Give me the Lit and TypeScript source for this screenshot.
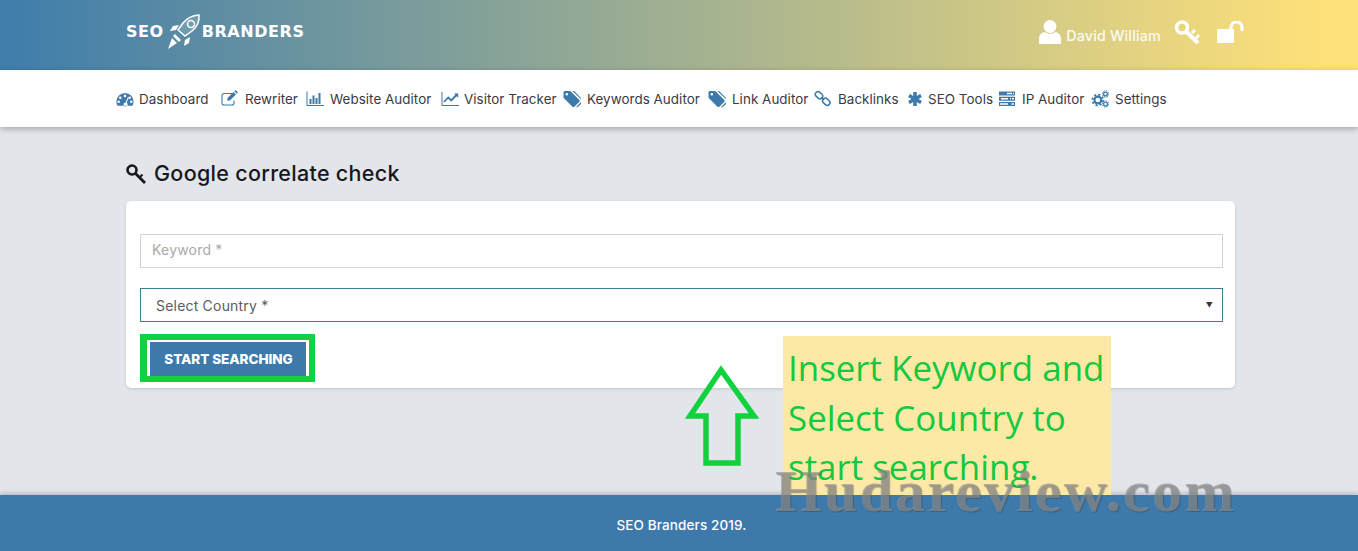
import { LitElement, html, css, svg } from "lit";
import { customElement } from "lit/decorators.js";

const ic: Record<string, any> = {
  dashboard: svg`<path fill-rule="evenodd" d="M9 3a8.6 8.6 0 0 0-8.6 8.6c0 1.500.4 2.900 1.100 4.100h15c.7-1.200 1.100-2.600 1.100-4.100A8.600 8.600 0 0 0 9 3zM9 4.600a1.300 1.300 0 1 1 0 2.600 1.300 1.300 0 0 1 0-2.600zM4.300 6.400a1.300 1.300 0 1 1 0 2.600 1.300 1.300 0 0 1 0-2.600zM13.700 6.400a1.300 1.300 0 1 1 0 2.600 1.300 1.300 0 0 1 0-2.600zM2.700 10.500a1.300 1.300 0 1 1 0 2.600 1.300 1.300 0 0 1 0-2.600zM15.300 10.500a1.300 1.300 0 1 1 0 2.600 1.300 1.300 0 0 1 0-2.600zM11.800 7.200l.9.4-2 5.200a2 2 0 1 1-1-.3z"/>`,
  edit: svg`<path fill="none" stroke="currentColor" stroke-width="1.100" d="M13 10.500V13a2 2 0 0 1-2 2H3a2 2 0 0 1-2-2V5.500a2 2 0 0 1 2-2h8"/><path d="M6.500 8 12.500 2l2.400 2.400-6 6-2.600.3zM13.300 1.200l.8-.7c.3-.3.7-.3 1 0l1.400 1.400c.3.3.3.7 0 1l-.7.8z"/>`,
  bars: svg`<path d="M.5 1.500h1V15h16.500v1H.5zM3.500 9h2v5h-2zM6.500 5.500h2V14h-2zM9.500 8h2v6h-2zM12.500 3h2v11h-2z"/>`,
  line: svg`<path d="M.5 2h1v13h16.500v1H.5z"/><path fill="none" stroke="currentColor" stroke-width="1.800" d="M3 12l4.200-4.500 3 3L16 4.500"/><path d="M13 3.500h4.200v4.200z"/>`,
  tags: svg`<path fill-rule="evenodd" d="M.5 2.500v5.300L9.500 16.800c.5.500 1.300.5 1.800 0l5-5c.5-.5.500-1.300 0-1.800L7.300 1H2c-.8 0-1.500.7-1.500 1.500zM3.800 3a1.300 1.300 0 1 1 0 2.600 1.300 1.300 0 0 1 0-2.600z"/><path d="M9.300 1h1.800l9 9c.5.500.5 1.300 0 1.800l-5.300 5.300c-.5.400-1.100.4-1.600 0l5.400-5.700c.5-.5.500-1 0-1.500z"/>`,
  link: svg`<g fill="none" stroke="currentColor" stroke-width="1.500"><rect x="1" y="2.500" width="8" height="5.400" rx="2.700" transform="rotate(42 5 5.200)"/><rect x="8.300" y="9" width="8" height="5.400" rx="2.700" transform="rotate(42 12.300 11.700)"/><path d="M7.300 7.300l2.800 2.600"/></g>`,
  star: svg`<g><rect x="7.200" y="2" width="3.600" height="14" rx=".5"/><rect x="7.200" y="2" width="3.600" height="14" rx=".5" transform="rotate(60 9 9)"/><rect x="7.200" y="2" width="3.600" height="14" rx=".5" transform="rotate(120 9 9)"/></g>`,
  server: svg`<path fill-rule="evenodd" d="M1 1.500h16v4H1zM9 2.700v1.500h5V2.700zM15 2.700v1.500h1V2.700zM1 6.700h16v4H1zM3 8v1.500h7V8zM12 8v1.500h1V8zM14 8v1.500h2V8zM1 12h16v4H1zM2 13.300v1.500h8v-1.500zM13.500 13.300v1.500h2.500v-1.500z"/>`,
  cogs: svg`<g fill="none" stroke="currentColor"><circle cx="6.800" cy="10" r="3.400" stroke-width="2.200"/><circle cx="6.800" cy="10" r="5.400" stroke-width="1.800" stroke-dasharray="2.200 2"/><circle cx="14.500" cy="4" r="1.900" stroke-width="1.300"/><circle cx="14.500" cy="4" r="3.200" stroke-width="1" stroke-dasharray="1.300 1.200"/><circle cx="14.500" cy="14" r="1.900" stroke-width="1.300"/><circle cx="14.500" cy="14" r="3.200" stroke-width="1" stroke-dasharray="1.300 1.200"/></g>`,
};
const items = [
  ["dashboard", "Dashboard", 72, 5], ["edit", "Rewriter", 51, 6], ["bars", "Website Auditor", 101, 6],
  ["line", "Visitor Tracker", 89, 5], ["tags", "Keywords Auditor", 111, 6], ["tags", "Link Auditor", 72, 6],
  ["link", "Backlinks", 58, 6], ["star", "SEO Tools", 60, 4], ["server", "IP Auditor", 59, 6], ["cogs", "Settings", 51, 6],
] as const;

@customElement("app-root")
export class AppRoot extends LitElement {
  static styles = css`
    :host { display: block; position: relative; width: 1358px; height: 551px; overflow: hidden; font-family: Inter, "Liberation Sans", sans-serif; background: #e2e5ea; }
    .head { height: 70px; box-sizing: border-box; padding: 0 113px 0 126px; display: flex; align-items: center; justify-content: space-between; background: linear-gradient(90deg, #3f7dab 0%, #fde07a 97%); color: #fff; }
    .logo { display: flex; align-items: center; font-family: "DejaVu Sans", sans-serif; font-weight: 700; font-size: 16px; letter-spacing: .55px; margin-top: -7px; }
    .logo svg { margin: 0 0 0 2px; }
    .user { display: flex; align-items: center; font-size: 14.300px; font-weight: 500; }
    .user > svg:first-child { margin-top: -7px; }
    .user span { margin: 1px 0 0 4px; letter-spacing: .2px; opacity: .92; }
    .user .k { margin: -6px 0 0 13px; }
    .user .u { margin: -7px 0 0 16px; }
    .nav { height: 57px; box-sizing: border-box; background: #fff; box-shadow: 0 2px 6px rgba(0,0,0,.28); padding: 0 0 0 116px; display: flex; align-items: center; gap: 10px; position: relative; }
    .item { display: flex; align-items: center; color: #3d7aab; }
    .item svg { display: block; width: 18px; height: 18px; fill: currentColor; }
    .item span { color: #3a3a44; font-size: 13.400px; letter-spacing: .05px; white-space: nowrap; }
    .main { height: 368px; box-sizing: border-box; padding: 33px 123px 0 126px; }
    h1 { margin: 0 0 14px; height: 27px; box-sizing: border-box; padding-bottom: 1px; display: flex; align-items: center; gap: 8px; font-size: 21.500px; font-weight: 500; color: #17171c; letter-spacing: .3px; }
    h1 svg { margin-top: 1px; }
    .card { height: 187px; box-sizing: border-box; background: #fff; border-radius: 5px; box-shadow: 0 1px 3px rgba(0,0,0,.14); padding: 33px 12px 0 14px; }
    .field { height: 34px; box-sizing: border-box; border: 1px solid #ced4da; display: flex; align-items: center; padding: 0 11px 3px; font-size: 14px; color: #a9a9ad; margin-bottom: 20px; letter-spacing: .2px; }
    .select { border-color: #3f7f93; color: #5c5c62; padding: 0 9px 0 15px; justify-content: space-between; }
    .select i { font-style: normal; font-size: 7px; color: #333; }
    .btn { box-sizing: border-box; display: inline-flex; align-items: center; justify-content: center; width: 157px; height: 36px; margin-left: 10px; padding-bottom: 2px; background: #3d7aab; color: #fff; font-weight: 800; font-size: 13.500px; letter-spacing: -.05px; }
    .foot { height: 56px; box-sizing: border-box; background: #3d7aab; box-shadow: 0 -2px 4px rgba(0,0,0,.18); display: flex; align-items: center; justify-content: center; color: #fff; font-size: 13.500px; font-weight: 500; letter-spacing: .12px; padding: 3px 0 0 5px; position: relative; }
    .box { position: absolute; left: 140px; top: 334px; width: 175px; height: 48px; box-sizing: border-box; border-style: solid; border-color: #0fd23e; border-width: 6px 6px 6px 7px; }
    .box::before { content: ""; position: absolute; left: 0; top: 0; bottom: 0; width: 3px; background: #fff; }
    .box::after { content: ""; position: absolute; right: 1px; top: 0; bottom: 0; width: 2px; background: #fff; }
    .arrow { position: absolute; left: 680px; top: 360px; }
    .note { position: absolute; left: 783px; top: 336px; width: 328px; height: 159px; box-sizing: border-box; padding: 7px 0 0 5px; background: #fde9a6; color: #14c83f; font-family: "Open Sans", "Noto Sans", sans-serif; font-size: 34.900px; line-height: 49.500px; }
    .mark { position: absolute; left: 775px; top: 456px; font-family: "Liberation Serif", serif; font-weight: 700; font-size: 60px; line-height: 70px; letter-spacing: 2.200px; color: rgba(145,145,145,.62); text-shadow: 1px 1px 1px rgba(60,60,60,.4); white-space: nowrap; }
  `;
  render() {
    return html`
      <div class="head">
        <div class="logo">SEO
          <svg width="36" height="36" viewBox="0 0 36 36" fill="none" stroke="#fff" stroke-width="1.500">
            <path fill="#fff" d="M33 1c-6 .5-12 3-16 8l-5 7 7 6 7-5c5-4 7.500-10 7-16z" fill-opacity=".15"/>
            <circle cx="25" cy="10" r="3.500"/>
            <path fill="#fff" stroke="none" d="M13 11l-6 1-3 5 6-1zM24 23l-1 6-5 3 1-6zM9 20l6 6-2 2-6-6zM6 24l5 5-9 6z"/>
          </svg>
          BRANDERS
        </div>
        <div class="user">
          <svg width="24" height="26" viewBox="0 0 24 26" fill="#fff"><circle cx="12" cy="7.500" r="6.500"/><path d="M1 24v-4c0-4 3-7 6-7 1.500 1.200 3 1.800 5 1.800s3.500-.6 5-1.800c3 0 6 3 6 7v4c0 .6-.5 1-1 1H2c-.5 0-1-.4-1-1z"/></svg>
          <span>David William</span>
          <svg class="k" width="27" height="26" viewBox="0 0 27 26" fill="none" stroke="#fff"><circle cx="8" cy="8.500" r="5.500" stroke-width="3.500"/><path stroke-width="4" d="M12 12.500 24 24"/><path stroke-width="3" d="M18 14l3-3M22 19l3-3"/></svg>
          <svg class="u" width="28" height="22" viewBox="0 0 28 22" fill="#fff"><rect x="0" y="8" width="17" height="14" rx="1"/><path fill="none" stroke="#fff" stroke-width="3.200" d="M14 9V6.500a5.500 5.500 0 0 1 11 0V10"/></svg>
        </div>
      </div>
      <div class="nav">
        ${items.map(([i, t, w, g]) => html`<div class="item"><svg viewBox="0 0 18 18">${ic[i]}</svg><span style="width:${w}px;margin-left:${g}px">${t}</span></div>`)}
      </div>
      <div class="main">
        <h1>
          <svg width="20" height="20" viewBox="0 0 20 20" fill="none" stroke="#17171c"><circle cx="6" cy="6" r="4.500" stroke-width="2.600"/><path stroke-width="2.800" d="M9.500 9.500 19 19"/><path stroke-width="2" d="M14 13l2.500-2.500"/></svg>
          Google correlate check
        </h1>
        <div class="card">
          <div class="field">Keyword *</div>
          <div class="field select">Select Country *<i>▼</i></div>
          <div class="btn">START SEARCHING</div>
        </div>
      </div>
      <div class="foot">SEO Branders 2019.</div>
      <div class="box"></div>
      <svg class="arrow" width="84" height="110" viewBox="0 0 84 110" fill="none" stroke="#0fd23e" stroke-width="5.500"><path d="M41 10 10 56h16v47h32V56h16z"/></svg>
      <div class="note">Insert Keyword and<br>Select Country to<br>start searching.</div>
      <div class="mark">Hudareview.com</div>
    `;
  }
}
